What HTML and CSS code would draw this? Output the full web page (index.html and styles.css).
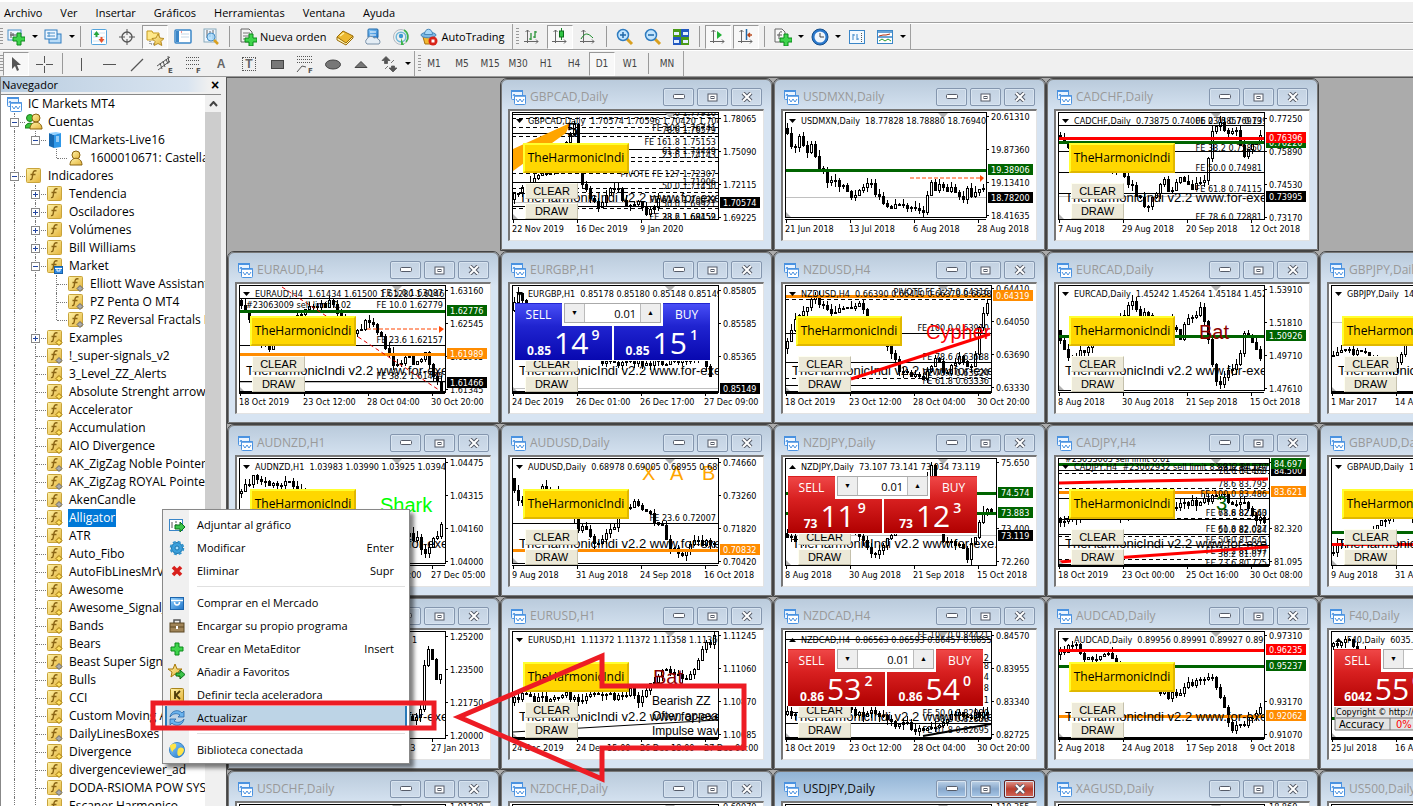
FILE: index.html
```html
<!DOCTYPE html>
<html lang="es">
<head>
<meta charset="utf-8">
<title>IC Markets MT4</title>
<link rel="stylesheet" href="styles.css">
</head>
<body>
<svg class="defs" aria-hidden="true">
  <defs>
    <linearGradient id="gold" x1="0" y1="0" x2="1" y2="1"><stop offset="0" stop-color="#fff3a8"/><stop offset="1" stop-color="#e4b43c"/></linearGradient>
    <linearGradient id="blue" x1="0" y1="0" x2="1" y2="1"><stop offset="0" stop-color="#8fd0ff"/><stop offset="1" stop-color="#1f74c8"/></linearGradient>
    <g id="plus"><path d="M4 0h4v4h4v4H8v4H4V8H0V4h4z" fill="#3fd44c" stroke="#0a8a1a"/></g>
    <g id="axes"><path d="M4.500 2v13M1 13.500h14M2.500 4l2-2 2 2M13 11.500l2 2-2 2" fill="none" stroke="#666"/></g>
    <symbol id="newchart" viewBox="0 0 18 18"><rect x="1" y="2" width="13" height="10" fill="#eef6ff" stroke="#4a90c8"/><path d="M4 4v6M3 7h8M6 5v3" stroke="#555" fill="none"/><use href="#plus" x="6" y="5"/></symbol>
    <symbol id="profiles" viewBox="0 0 18 18"><rect x="5" y="6" width="12" height="9" fill="#b9dcf8" stroke="#2f7cc0"/><rect x="1" y="2" width="12" height="9" fill="#eef6ff" stroke="#2f7cc0"/><path d="M3 5h8M3 8h8M5 4v5" stroke="#4a90c8"/></symbol>
    <symbol id="watch" viewBox="0 0 18 18"><rect x="1.500" y="1.500" width="15" height="15" rx="1" fill="#fff" stroke="#55a5dd"/><path d="M3 5h12M3 9h12M3 13h12" stroke="#cfe4f4"/><path d="M6.500 3l3 4h-2v2h-2V7h-2z" fill="#26a63a"/><path d="M11.500 15l3-4h-2V9h-2v2h-2z" fill="#e8542c"/></symbol>
    <symbol id="target" viewBox="0 0 18 18"><circle cx="9" cy="9" r="5" fill="none" stroke="#555" stroke-width="1.300"/><path d="M9 1v6M9 11v6M1 9h6M11 9h6" stroke="#555"/></symbol>
    <symbol id="nav" viewBox="0 0 18 18"><path d="M1 3h5l1 2h6v7H1z" fill="#ffe98a" stroke="#c59a20"/><path d="M4 13v3h4" fill="none" stroke="#555" stroke-dasharray="1 1"/><path d="M12 6l2 4 4 .5-3 3 .8 4-3.800-2-3.800 2 .8-4-3-3 4-.5z" fill="url(#gold)" stroke="#a87808" stroke-width=".8"/></symbol>
    <symbol id="terminal" viewBox="0 0 18 18"><rect x="1" y="2" width="16" height="13" rx="1" fill="#fff" stroke="#3a86c8" stroke-width="1.500"/><rect x="2" y="3" width="3" height="11" fill="#3a86c8"/><path d="M7 6h8M7 9h8" stroke="#c4d8e8"/><path d="M7 4h1" stroke="#d22"/></symbol>
    <symbol id="tester" viewBox="0 0 18 18"><rect x="2" y="1" width="12" height="13" fill="#eef6ff" stroke="#8ab"/><path d="M5 2v8M8 3v6M11 2v9" stroke="#666"/><circle cx="9" cy="9" r="4" fill="#a8dcff" fill-opacity=".8" stroke="#4a90c8"/><path d="M12 12l4 4" stroke="#d9a020" stroke-width="2.500"/></symbol>
    <symbol id="order" viewBox="0 0 18 18"><path d="M2 1h8l3 3v10H2z" fill="#f4f4f4" stroke="#666"/><path d="M4 5h7M4 8h7M4 11h3" stroke="#777"/><use href="#plus" x="6" y="6"/></symbol>
    <symbol id="book" viewBox="0 0 18 18"><path d="M1 9v3l9 5 7-7V8" fill="#fff3b0" stroke="#9a6c08"/><path d="M1 9l6-6 10 5-7 7z" fill="#ecb830" stroke="#9a6c08"/><path d="M4 8l4-3" stroke="#fff0a0" stroke-width="1.500"/></symbol>
    <symbol id="market" viewBox="0 0 18 18"><rect x="4" y="1" width="10" height="9" rx="1" fill="url(#blue)" stroke="#2068a8"/><path d="M6 4h6M6 7h6" stroke="#fff"/><path d="M3 16a3 3 0 010-5 4 4 0 017-1 3 3 0 014 1 3 3 0 011 5z" fill="#e4edf5" stroke="#7890a8"/></symbol>
    <symbol id="signal" viewBox="0 0 18 18"><circle cx="9" cy="9" r="7.500" fill="none" stroke="#b0b8c0"/><circle cx="9" cy="9" r="4.800" fill="none" stroke="#72b8d8" stroke-width="1.500"/><circle cx="9" cy="8" r="2.200" fill="#3c98d0"/><path d="M9 10l3 7H9z" fill="#3cb44a"/><path d="M12 2a8 8 0 012 12" fill="none" stroke="#3cb44a" stroke-width="1.600"/></symbol>
    <symbol id="auto" viewBox="0 0 18 18"><path d="M3 9l2 7h6l3-7z" fill="#f2b830" stroke="#a87010"/><ellipse cx="8.500" cy="7" rx="7.500" ry="2.800" fill="#7ab8e4" stroke="#4a88b8"/><path d="M4.500 6.500c0-7 8-7 8 0z" fill="#a8d8f8" stroke="#4a88b8"/><circle cx="13" cy="13" r="4.500" fill="#d92318"/><rect x="11.500" y="11.500" width="3" height="3" fill="#fff"/></symbol>
    <symbol id="bars" viewBox="0 0 18 18"><use href="#axes"/><path d="M8 5v7M8 11h-2M12 3v7M12 4h2M10 9h2" stroke="#178a26" stroke-width="1.200"/></symbol>
    <symbol id="candlesic" viewBox="0 0 18 18"><use href="#axes"/><path d="M10.500 0v12" stroke="#178a26"/><rect x="8.500" y="3" width="4" height="6" fill="#2fc443" stroke="#0c6c1a"/></symbol>
    <symbol id="linesic" viewBox="0 0 18 18"><use href="#axes"/><path d="M2 11c4-7 7-6 12-1" fill="none" stroke="#178a26"/></symbol>
    <symbol id="zin" viewBox="0 0 18 18"><path d="M11 11l5 5" stroke="#d9a020" stroke-width="3"/><circle cx="7" cy="7" r="5.500" fill="#c4e6ff" stroke="#2f7cc0" stroke-width="1.500"/><path d="M4 7h6M7 4v6" stroke="#2068a8" stroke-width="1.500"/></symbol>
    <symbol id="zout" viewBox="0 0 18 18"><path d="M11 11l5 5" stroke="#d9a020" stroke-width="3"/><circle cx="7" cy="7" r="5.500" fill="#c4e6ff" stroke="#2f7cc0" stroke-width="1.500"/><path d="M4 7h6" stroke="#2068a8" stroke-width="1.500"/></symbol>
    <symbol id="tile" viewBox="0 0 18 18"><path d="M1 1h8v8H1zM9 9h8v8H9z" fill="#4a9a18"/><path d="M9 1h8v8H9zM1 9h8v8H1z" fill="#2258c0"/><path d="M2 4h5v3H2zM11 4h5v3h-5zM2 12h5v3H2zM11 12h5v3h-5z" fill="#e4f0ff"/></symbol>
    <symbol id="scroll" viewBox="0 0 18 18"><use href="#axes"/><path d="M8 3l5 4-5 4z" fill="#22b036"/></symbol>
    <symbol id="shift" viewBox="0 0 18 18"><use href="#axes"/><path d="M9.500 1v11" stroke="#2068a8" stroke-width="1.500"/><path d="M15 7h-4M13 5l-2 2 2 2" fill="none" stroke="#b8481c" stroke-width="1.500"/></symbol>
    <symbol id="indic" viewBox="0 0 18 18"><path d="M1 1h7l3 3v10H1z" fill="#f8f8f8" stroke="#666"/><path d="M8 4c-3-1-3 2-3 7M3 7h5" fill="none" stroke="#555"/><use href="#plus" x="6" y="6"/></symbol>
    <symbol id="clock" viewBox="0 0 18 18"><circle cx="9" cy="9" r="8" fill="#2a78cc" stroke="#16508c"/><circle cx="9" cy="9" r="5.500" fill="#f0f6fc"/><path d="M9 5v4h4" fill="none" stroke="#444"/></symbol>
    <symbol id="period" viewBox="0 0 18 18"><rect x="1.500" y="2.500" width="15" height="13" fill="#f4faff" stroke="#3a86c8"/><path d="M5 12V6M5 7h2M9 12V6M9 11h2" stroke="#3a86c8"/><path d="M13.500 5v9" stroke="#555" stroke-dasharray="1 1"/></symbol>
    <symbol id="templ" viewBox="0 0 18 18"><rect x="1.500" y="2.500" width="15" height="13" fill="#fff" stroke="#3a86c8"/><path d="M2 4h14M2 9h14" stroke="#3a86c8" stroke-width="1.500"/><path d="M3 8l4-1 3 0 4-1" fill="none" stroke="#b03010"/><path d="M3 13l3-2 3 2 3-2 3 2" fill="none" stroke="#2a9a30"/></symbol>
    <symbol id="cursor" viewBox="0 0 18 18"><path d="M5 2v12l3-3 2 5 2-1-2-5h4z" fill="#555"/></symbol>
    <symbol id="cross" viewBox="0 0 18 18"><path d="M9.500 1v7M9.500 11v7M1 9.500h7M11 9.500h7" stroke="#555"/></symbol>
    <symbol id="vl" viewBox="0 0 18 18"><path d="M9.500 3v13" stroke="#555"/></symbol>
    <symbol id="hl" viewBox="0 0 18 18"><path d="M3 9.500h13" stroke="#555"/></symbol>
    <symbol id="tl" viewBox="0 0 18 18"><path d="M3 16L15 4" stroke="#555" stroke-width="1.300"/></symbol>
    <symbol id="chan" viewBox="0 0 18 18"><path d="M1 11L14 2M2 15l12-9M4 8l2 6M7 6l2 6M10 4l2 5M12 1l1 7" stroke="#555"/><text x="12" y="18" class="tiny">E</text></symbol>
    <symbol id="fibo" viewBox="0 0 18 18"><path d="M2 2.500h14M2 5.500h14M2 9.500h14M2 13.500h8" stroke="#555" stroke-dasharray="1 1"/><text x="12" y="18" class="tiny">F</text></symbol>
    <symbol id="fan" viewBox="0 0 18 18"><path d="M1 1.500h16M1 4.500h16M1 7.500h16" stroke="#555" stroke-dasharray="1 1"/><path d="M1 17l5-6 4 1" stroke="#555" fill="none"/><text x="12" y="18" class="tiny">F</text></symbol>
    <symbol id="rect" viewBox="0 0 18 18"><rect x="3.500" y="5.500" width="12" height="8" fill="#777" stroke="#444"/></symbol>
    <symbol id="ell" viewBox="0 0 18 18"><ellipse cx="9" cy="9.500" rx="7.500" ry="4.500" fill="#777" stroke="#444"/></symbol>
    <symbol id="tri" viewBox="0 0 18 18"><path d="M3 12.500l6-6 6 6z" fill="#777" stroke="#444"/></symbol>
    <symbol id="arrows" viewBox="0 0 18 18"><path d="M6 1.500l4 4H7.500v3h-3v-3H2zM13 17l4-4h-2.500v-2h-3v2H9zM5 14l3-3M11 8l3-3" fill="#555" stroke="#555" stroke-width=".8"/></symbol>
    <symbol id="win" viewBox="0 0 15 15"><rect x=".5" y=".5" width="11" height="9" rx="1" fill="#eaf4ff" stroke="#4a92e0"/><path d="M0 1h12" stroke="#4a92e0" stroke-width="2"/><path d="M2 6l1-2 2 3" fill="none" stroke="#4a92e0"/><rect x="3.500" y="5.500" width="11" height="9" rx="1" fill="#fff" stroke="#4a92e0"/><path d="M3 6h12" stroke="#4a92e0" stroke-width="1.500"/><path d="M5 9l2 3 2-3 2 3 2-3" fill="none" stroke="#4a92e0"/></symbol>
    <symbol id="users" viewBox="0 0 18 18"><circle cx="5" cy="5" r="3.500" fill="#3cc43c" stroke="#1a7a1a"/><path d="M0 15c0-6 9-7 10 0z" fill="#3cc43c" stroke="#1a7a1a"/><circle cx="11" cy="5" r="4" fill="url(#gold)" stroke="#8a6410"/><path d="M5 16c0-9 12-9 12 0z" fill="url(#gold)" stroke="#8a6410"/></symbol>
    <symbol id="user" viewBox="0 0 18 18"><circle cx="9" cy="6" r="4" fill="url(#gold)" stroke="#8a6410"/><path d="M3 16c0-9 12-9 12 0z" fill="url(#gold)" stroke="#8a6410"/></symbol>
    <symbol id="server" viewBox="0 0 18 18"><path d="M3 2l5 2v13l-5-2z" fill="#1668b0"/><path d="M3 2l7-1 5 1-7 2z" fill="#8fd0ff"/><path d="M8 4l7-2v14l-7 1z" fill="#2f98e8"/><path d="M10 6h3M10 8h3M10 10h3" stroke="#fff"/></symbol>
    <symbol id="fx" viewBox="0 0 18 18"><rect x="1.500" y="1.500" width="14" height="14" rx="1" fill="url(#gold)" stroke="#c8a43c"/><path d="M11.500 4C8 3 8 6 7.500 9S7 13 5 12.500M5.500 7.500h5" fill="none" stroke="#8a6414" stroke-width="1.400"/></symbol>
    <symbol id="fxd" viewBox="0 0 18 18"><use href="#fx"/><path d="M13 10.500l3 3-3 3-3-3z" fill="#ffe060" stroke="#9a7008"/></symbol>
    <symbol id="fxg" viewBox="0 0 18 18"><use href="#fx"/><path d="M13 10.500l3 3-3 3-3-3z" fill="#aaa" stroke="#666"/></symbol>
    <symbol id="fxm" viewBox="0 0 18 18"><use href="#fx"/><rect x="8.500" y="9.500" width="8" height="7" fill="#2f88e0" stroke="#1660a8"/><path d="M9 11.500h7M11 12v2h3v-2" stroke="#fff" fill="none"/></symbol>
    <symbol id="attach" viewBox="0 0 18 18"><rect x="1.500" y="3.500" width="13" height="11" fill="#fff" stroke="#3a86c8"/><path d="M4 6v6M7 6h2M7 9h2" stroke="#555"/><path d="M7 9h5V6l5 5-5 5v-3H7z" fill="#3cc44a" stroke="#0a7018"/></symbol>
    <symbol id="gear" viewBox="0 0 18 18"><circle cx="9" cy="9" r="5.500" fill="#3aa0dc" stroke="#1c74ac"/><circle cx="9" cy="9" r="6.500" fill="none" stroke="#2a90cc" stroke-width="1.500" stroke-dasharray="3 2.100"/><circle cx="9" cy="9" r="2" fill="#a8e0ff" stroke="#1c74ac"/></symbol>
    <symbol id="del" viewBox="0 0 18 18"><path d="M5 5l8 8M13 5l-8 8" stroke="#d8201c" stroke-width="3.600"/></symbol>
    <symbol id="shop" viewBox="0 0 18 18"><rect x="2.500" y="3.500" width="13" height="12" fill="url(#blue)" stroke="#1c64ac"/><path d="M3 6.500h12" stroke="#fff" stroke-width="1.500"/><path d="M6.500 8c0 4 5 4 5 0" fill="none" stroke="#fff" stroke-width="1.500"/></symbol>
    <symbol id="case" viewBox="0 0 18 18"><path d="M6 6V3h6v3" fill="none" stroke="#555" stroke-width="1.500"/><rect x="2" y="6" width="14" height="9" fill="#a08458" stroke="#5c4824"/><path d="M2 10h14" stroke="#5c4824"/><rect x="8" y="9" width="2" height="3" fill="#fff"/></symbol>
    <symbol id="add" viewBox="0 0 18 18"><use href="#plus" x="3" y="3"/></symbol>
    <symbol id="fav" viewBox="0 0 18 18"><path d="M7 1l2 5h5l-4 3 1.500 5L7 11l-4 3 1-5-4-3h5z" fill="url(#gold)" stroke="#a87808"/><path d="M8 10h4V7l5 4.500-5 4.500v-3H8z" fill="#3cc44a" stroke="#0a7018"/></symbol>
    <symbol id="key" viewBox="0 0 18 18"><rect x="2.500" y="2.500" width="13" height="13" rx="1" fill="url(#gold)" stroke="#a8841c"/><path d="M7 5v8M12 5l-4 4 4 4" fill="none" stroke="#4c3a08" stroke-width="1.800"/></symbol>
    <symbol id="refresh" viewBox="0 0 18 18"><path d="M2 8c1-7 9-8 12-4l2-2v6h-6l2-2C9 4 5 4 2 8zM16 10c-1 7-9 8-12 4l-2 2v-6h6l-2 2c3 2 7 2 10-2z" fill="#6ab4ee" stroke="#2868a8" stroke-width=".8"/></symbol>
    <symbol id="globe" viewBox="0 0 18 18"><circle cx="9" cy="9" r="7.500" fill="url(#blue)" stroke="#3a86c8"/><path d="M3 4c4-3 6-1 5 2s-3 2-3 4-3-1-3-6zM10 8c3-3 6-1 6 1s-3 6-5 6-2-4-1-7z" fill="#ffe448"/></symbol>
  </defs>
</svg>

<nav class="menubar" aria-label="Menú principal">
  <button>Archivo</button><button>Ver</button><button>Insertar</button><button>Gráficos</button><button>Herramientas</button><button>Ventana</button><button>Ayuda</button>
</nav>
<div class="toolbar" data-items="grip newchart drop profiles drop | watch target nav! terminal tester | order:Nueva_orden book market signal auto:AutoTrading end grip bars candlesic! linesic | zin zout tile | scroll! shift! | indic drop clock drop period templ drop end"></div>
<div class="toolbar" data-items="grip cursor! cross | vl hl tl chan fibo #A #T rect fan ell tri arrows drop end grip #M1 #M5 #M15 #M30 #H1 #H4 #D1! #W1 | #MN end"></div>

<div class="main">
  <aside class="navigator">
    <header><span>Navegador</span><button aria-label="Cerrar">×</button></header>
    <div class="navbody">
      <div class="tree" role="tree"></div>
      <div class="scrollbar"><button aria-label="Subir"><svg width="9" height="6"><path d="M1 5l3.500-4L8 5" fill="none" stroke="#444" stroke-width="2"/></svg></button><div class="thumb"></div></div>
    </div>
  </aside>
  <main class="desktop"></main>
</div>

<div class="context" role="menu">
  <button><svg><use href="#attach"/></svg><span>Adjuntar al gráfico</span></button>
  <button><svg><use href="#gear"/></svg><span>Modificar</span><kbd>Enter</kbd></button>
  <button><svg><use href="#del"/></svg><span>Eliminar</span><kbd>Supr</kbd></button>
  <hr>
  <button><svg><use href="#shop"/></svg><span>Comprar en el Mercado</span></button>
  <button><svg><use href="#case"/></svg><span>Encargar su propio programa</span></button>
  <button><svg><use href="#add"/></svg><span>Crear en MetaEditor</span><kbd>Insert</kbd></button>
  <button><svg><use href="#fav"/></svg><span>Añadir a Favoritos</span></button>
  <button><svg><use href="#key"/></svg><span>Definir tecla aceleradora</span></button>
  <button class="active"><svg><use href="#refresh"/></svg><span>Actualizar</span></button>
  <hr>
  <button><svg><use href="#globe"/></svg><span>Biblioteca conectada</span></button>
</div>
<svg class="marks" aria-hidden="true">
  <rect x="153" y="703" width="281" height="25"/>
  <path d="M459 717L602 656v30h142v62H602v31z"/>
</svg>
<script src="app.js"></script>
</body>
</html>
```
FILE: styles.css
```css
* { box-sizing: border-box; }
body { margin: 0; height: 100vh; overflow: hidden; display: flex; flex-direction: column; background: #f0f0f0; color: #000; font: 12px/18px "Open Sans", "Noto Sans", sans-serif; position: relative; }
button { font: inherit; color: inherit; background: none; border: 0; padding: 0; margin: 0; }
.defs { position: absolute; width: 0; height: 0; }
.tiny { font: bold 7px "DejaVu Sans", sans-serif; fill: #555; }

.menubar { display: flex; gap: 18px; height: 23px; padding: 1px 4px 0; border-top: 2px solid #fff; border-bottom: 1px solid #a0a0a0; flex: none; font-size: 11px; }
.toolbar { display: flex; align-items: center; height: 27px; border-top: 1px solid #fff; border-bottom: 1px solid #a0a0a0; flex: none; }
.toolbar + .toolbar { border-bottom: 0; height: 26px; }
.grip { width: 3px; height: 18px; margin-right: -1px; background: repeating-linear-gradient(#999 0 1px, #f0f0f0 1px 3px); }
.end { width: 1px; height: 25px; background: #a0a0a0; margin: 0 3px 0 2px; }
.sep { width: 1px; height: 21px; background: #999; margin: 0 4px; }
.tool { width: 28px; height: 24px; display: flex; align-items: center; justify-content: center; }
.tool svg { width: 18px; height: 18px; flex: none; }
.tool.wide { width: auto; padding: 0 5px; gap: 3px; font-size: 11px; }
.tool.pressed { width: 26px; margin: 0 1px; background: #f8f8f8; border: 1px solid; border-color: #999 #fff #fff #999; }
.tool.txt { font: 10px "DejaVu Sans Condensed", "Noto Sans", sans-serif; color: #444; }
.tool.letter { font: bold 12px "Liberation Sans", sans-serif; color: #666; }
.tool.boxed span { border: 1px dotted #555; padding: 0 2px; line-height: 12px; }
.drop { width: 9px; height: 24px; display: flex; align-items: center; justify-content: center; }
.drop::before { content: ""; border: 3px solid transparent; border-top-color: #000; border-bottom: 0; }

.main { flex: 1; display: flex; min-height: 0; border-top: 1px solid #999; }
.navigator { width: 226px; flex: none; display: flex; flex-direction: column; border-left: 1px solid #888; }
.navigator header { height: 15px; margin: 0 6px 0 0; padding-left: 1px; display: flex; justify-content: space-between; align-items: center; background: linear-gradient(90deg, #b9cde0, #d9e4f0 85%, #f0f0f0 95%); font: 11px "Open Sans", sans-serif; }
.navigator header button { font: bold 14px/12px "Liberation Sans", sans-serif; width: 10px; }
.navbody { flex: 1; min-height: 0; display: flex; margin: 2px 5px 0 0; background: #fff; border-top: 1px solid #888; }
.tree { flex: 1; min-width: 0; overflow: hidden; }
.row { display: flex; align-items: center; height: 18px; white-space: nowrap; padding-left: 3px; }
.row > svg { width: 18px; height: 18px; flex: none; margin-right: 4px; }
.row.root > svg { width: 15px; height: 15px; margin: 0 6px 0 3px; }
.row.sel .label { background: #0078d7; color: #fff; }
.row .label { padding: 0 1px; }
.row.root .label { padding: 0; }
.cell { width: 21px; height: 18px; flex: none; position: relative; }
.cell.v::before, .cell.b::before, .cell.c::before { content: ""; position: absolute; left: 10px; top: 0; bottom: 0; border-left: 1px dotted #777; }
.cell.c::before { bottom: 9px; }
.cell.b::after, .cell.c::after { content: ""; position: absolute; left: 11px; right: 0; top: 9px; border-top: 1px dotted #777; }
.cell button { position: absolute; z-index: 1; left: 6px; top: 5px; width: 9px; height: 9px; border: 1px solid #888; background: #fff; }
.cell button::before { content: ""; position: absolute; left: 1px; right: 1px; top: 3px; border-top: 1px solid #2446a0; }
.cell button.plus::after { content: ""; position: absolute; top: 1px; bottom: 1px; left: 3px; border-left: 1px solid #2446a0; }
.scrollbar { width: 16px; background: #f0f0f0; }
.scrollbar button { display: flex; width: 16px; height: 17px; align-items: center; justify-content: center; }
.thumb { height: 57%; background: #cdcdcd; }

.desktop { flex: 1; min-width: 0; overflow: hidden; background: #ababab; border-left: 1px solid #555; display: grid; grid-template-columns: repeat(5, 273px); grid-auto-rows: 173px; border-top: 1px solid #555; }
.window { border: 1px solid #444; outline: 1px solid #777; outline-offset: -2px; border-radius: 7px 7px 0 0; background: linear-gradient(#b9cadb, #d7e4f2 34px); padding: 6px 8px 9px 7px; display: flex; flex-direction: column; }
.window.on { background: linear-gradient(#8fb2d4, #c2d8ee 34px); }
.bar { height: 24px; display: flex; align-items: center; gap: 3px; padding: 0 2px 0 3px; }
.bar svg.wi { width: 15px; height: 15px; flex: none; }
.bar h2 { flex: 1; margin: 0 0 0 1px; font: 12px/18px "Open Sans", sans-serif; color: #999; white-space: nowrap; }
.on .bar h2 { color: #111; }
.bar button { width: 31px; height: 18px; border: 1px solid #8496ae; border-radius: 2px; background: linear-gradient(#c3d2e2, #cfdceb); box-shadow: inset 0 0 0 1px #d8e4f0; display: flex; align-items: center; justify-content: center; }
.on .bar button { background: linear-gradient(#bcd2e8, #88a8cc 50%, #a8c8e8); }
.on .bar button:last-child { background: linear-gradient(#e09a90, #b83c2c 50%, #d0685c); border-color: #602020; }
.client { flex: 1; position: relative; overflow: hidden; background: #fff; border: 2px solid #777; border-right-color: #e3e3e3; border-bottom-color: #e3e3e3; border-right-width: 1px; border-bottom-width: 1px; }
.client > svg { display: block; position: absolute; left: 0; top: 0; width: 254px; height: 129px; }
.client text { font: 9px "DejaVu Sans Condensed", "Noto Sans", sans-serif; white-space: pre; }
.client text.mark { font: 13px "Liberation Sans", sans-serif; }
.client text.big { font: 20px "Liberation Sans", sans-serif; }
.client text.note { font: 12px "Liberation Sans", sans-serif; }
.client text.info { font-size: 11px; }
.indi, .cmd { position: absolute; z-index: 1; }
.indi { left: 13px; top: 32px; width: 106px; height: 30px; background: #ffd700; border: 2px solid; border-color: #ffff30 #e0b800 #e0b800 #ffff30; white-space: nowrap; }
.cmd { left: 15px; width: 53px; height: 16px; background: #ece9d8; border: 1px solid; border-color: #fffff0 #c4c0ac #c4c0ac #fffff0; font: 11px/14px "Liberation Sans", sans-serif; }
.cmd.clear { top: 72px; }
.cmd.draw { top: 92px; }
.quote { position: absolute; z-index: 2; left: 5px; top: 19px; width: 195px; height: 58px; border-bottom: 2px solid #fff; display: grid; grid-template-columns: 47px 1fr 47px; grid-template-rows: 23px 33px; color: #fff; --a: #4a50f8; --b: #2024d0; --c: #0808b0; background: #fff; }
.quote.red { --a: #f04848; --b: #d82020; --c: #b00000; }
.quote.narrow { width: 189px; }
.quote .side { background: linear-gradient(var(--a), var(--b)); height: 23px; line-height: 21px; box-shadow: inset 0 1px var(--b); }
.quote .vol { display: flex; border: 1px solid #aaa; margin: 0 2px 3px; background: #fff; color: #000; }
.vol button { width: 19px; background: #eee; font-size: 7px; line-height: 18px; flex: none; }
.vol input { border: 0; border-left: 1px solid #bbb; border-right: 1px solid #bbb; width: 10px; flex: 1; min-width: 0; text-align: right; padding: 0 4px; font: 11px "Open Sans", sans-serif; }
.prices { grid-column: 1 / 4; display: grid; grid-template-columns: 1fr 1fr; gap: 2px; }
.prices div { background: linear-gradient(var(--b), var(--c)); display: flex; justify-content: center; align-items: flex-end; gap: 3px; }
.prices b { font-size: 12px; line-height: 19px; }
.prices big { font-size: 30px; line-height: 34px; }
.prices sup { font-size: 14px; line-height: 18px; align-self: flex-start; font-weight: 600; }

.context { position: absolute; z-index: 5; left: 162px; top: 509px; width: 248px; padding: 3px 2px 2px; border: 1px solid #888; background: linear-gradient(90deg, #f0f0f0 26px, #fff 26px); box-shadow: 4px 4px 4px rgba(0, 0, 0, .5); font-size: 11px; }
.context button { display: flex; width: 100%; height: 23px; align-items: center; padding: 0 13px 0 3px; text-align: left; }
.context svg { width: 18px; height: 18px; margin-right: 11px; }
.context span { flex: 1; }
.context kbd { font: inherit; }
.context hr { height: 1px; border: 0; margin: 4px 2px 4px 32px; background: #e0e0e0; }
.context .active { background: #bdd4e6; box-shadow: inset 2px 0 #2a7ab8, inset -2px 0 #2a7ab8; }
.marks { position: absolute; z-index: 6; left: 0; top: 0; width: 100%; height: 100%; pointer-events: none; fill: none; stroke: #ed1c24; stroke-width: 5px; }
```
FILE: app.js
```js
const use = (id, cls = '') => `<svg class="${cls}"><use href="#${id}"/></svg>`;

document.querySelectorAll('.toolbar').forEach(bar => {
  bar.innerHTML = bar.dataset.items.split(' ').map(item => {
    if (item === '|') return '<span class="sep"></span>';
    if (item === 'grip' || item === 'end') return `<span class="${item}"></span>`;
    if (item === 'drop') return '<button class="drop" aria-label="Más"></button>';
    const pressed = item.endsWith('!') ? ' pressed' : '';
    item = item.replace('!', '');
    if (item[0] === '#') {
      const t = item.slice(1);
      const kind = t === 'T' ? 'letter boxed' : t === 'A' ? 'letter' : 'txt';
      return `<button class="tool ${kind}${pressed}"><span>${t}</span></button>`;
    }
    const [id, label] = item.split(':');
    return label
      ? `<button class="tool wide">${use(id)}<span>${label.replace('_', ' ')}</span></button>`
      : `<button class="tool${pressed}" aria-label="${id}">${use(id)}</button>`;
  }).join('');
});

/* Each entry: guide cells, icon, label. v = line, b = branch, c = corner, s = space; - and + add an expander. */
const tree = [
  ['', 'win', 'IC Markets MT4'],
  ['b-', 'users', 'Cuentas'],
  ['v c-', 'server', 'ICMarkets-Live16'],
  ['v s c', 'user', '1600010671: Castella SL'],
  ['b-', 'fx', 'Indicadores'],
  ['v b+', 'fx', 'Tendencia'], ['v b+', 'fx', 'Osciladores'], ['v b+', 'fx', 'Volúmenes'], ['v b+', 'fx', 'Bill Williams'],
  ['v b-', 'fxm', 'Market'],
  ['v v b', 'fxg', 'Elliott Wave Assistant'], ['v v b', 'fxg', 'PZ Penta O MT4'], ['v v c', 'fxg', 'PZ Reversal Fractals MT4'],
  ['v b+', 'fxd', 'Examples'],
  ...['!_super-signals_v2', '3_Level_ZZ_Alerts', 'Absolute Strenght arrows', 'Accelerator', 'Accumulation', 'AIO Divergence',
    'AK_ZigZag Noble Pointer', 'AK_ZigZag ROYAL Pointer', 'AkenCandle', 'Alligator', 'ATR', 'Auto_Fibo', 'AutoFibLinesMrV',
    'Awesome', 'Awesome_Signal_', 'Bands', 'Bears', 'Beast Super Signal', 'Bulls', 'CCI', 'Custom Moving Average',
    'DailyLinesBoxes', 'Divergence', 'divergenceviewer_ad', 'DODA-RSIOMA POW SYS', 'Escaner Harmonico']
    .map(t => ['v b', /super|ZigZag|Aken|Beast|Daily|DODA/.test(t) ? 'fxg' : 'fxd', t])
];
document.querySelector('.tree').innerHTML = tree.map(([cells, icon, label]) => {
  const guides = cells ? cells.split(' ').map(c => `<span class="cell ${c[0]}">${
    c[1] ? `<button class="${c[1] === '+' ? 'plus' : ''}" aria-label="Expandir"></button>` : ''}</span>`).join('') : '';
  return `<div role="treeitem" class="row ${cells ? '' : 'root'} ${label === 'Alligator' ? 'sel' : ''}">${guides}${use(icon)}<span class="label">${label}</span></div>`;
}).join('');

const GREEN = '#006400', ORANGE = '#ff8c00', RED = '#ff0000';
const aug = ['8 Aug 2018', '30 Aug 2018', '21 Sep 2018', '15 Oct 2018'];
const oct = ['18 Oct 2019', '23 Oct 12:00', '28 Oct 04:00', '30 Oct 20:00'];

/* h: solid levels, d: dashed levels, lv: coloured levels, fe: right-aligned notes,
   tags: price boxes, p: price path, x: extra shapes */
const charts = [
  { col: 2, row: 1, t: 'GBPCAD,Daily', q: '1.70574 1.70596 1.70420 1.70485', y: ['1.78065', '1.75090', '1.72115', '1.69225'], y0: 41, dates: ['22 Nov 2019', '16 Dec 2019', '9 Jan 2020'],
    h: [37, 56, 72, 105, 129], d: [41, 50, 59, 80, 84, 96, 111, 115, 131], tags: [[125, '1.70574', '#000']],
    fe: [[38, '0.0 1.77916'], [53, 'FE 100 1.76741'], [55, '78.6 1.76579'], [67, 'FE 161.8 1.75153'], [76, '61.8 1.74449'], [80, '23.6 1.74143'], [99, 'PIVOTE FE 127 1.72307'], [107, '1.71906'], [111, '50.0 1.71450'], [125, 'FE 61.8 1.70073'], [129, '50.0 1.69921'], [142, 'FE 38.2 1.68459'], [142, '23.6 1.69152']],
    p: [[13, 122], [21, 112], [38, 103], [42, 96], [54, 95], [70, 60], [76, 50], [81, 88], [85, 112], [92, 118], [98, 130], [104, 126], [112, 112], [118, 108], [126, 128], [134, 124], [142, 124], [148, 136], [154, 133], [160, 124]],
    x: '<path d="M13 72L70 46 66 56 13 94z" fill="#ffa500"/><text x="67" y="60" class="big">5</text>' },
  { col: 3, row: 1, plain: 1, t: 'USDMXN,Daily', q: '18.77828 18.78880 18.76940', y: ['20.61310', '19.87360', '19.13410', '18.41635'], r: 213, pb: 140, dates: ['21 Jun 2018', '13 Jul 2018', '6 Aug 2018', '28 Aug 2018'],
    lv: [[93, GREEN]], tags: [[92, '19.38906', GREEN], [120, '18.78200', '#000']],
    p: [[13, 51], [17, 60], [21, 68], [25, 66], [30, 58], [34, 75], [38, 70], [42, 63], [46, 90], [52, 91], [56, 103], [66, 106], [72, 110], [80, 117], [88, 115], [95, 108], [100, 109], [106, 117], [112, 126], [120, 130], [130, 127], [140, 132], [148, 136], [152, 134], [158, 110], [162, 103], [165, 117], [169, 105], [175, 112], [185, 113], [192, 122], [195, 112], [202, 120], [206, 107], [211, 112]],
    x: '<path d="M137 101h70" stroke="#ff4500" stroke-dasharray="4 2"/><path d="M207 98l4 3-4 4z" fill="#ff4500"/>' },
  { col: 4, row: 1, t: 'CADCHF,Daily', q: '0.73875 0.74006 0.73857 0.73995', y: ['0.77250', '0.75890', '0.74530', '0.73170'], y0: 41, dates: ['7 Aug 2018', '29 Aug 2018', '20 Sep 2018', '12 Oct 2018'],
    h: [48, 74, 95, 116], lv: [[65, GREEN], [61, RED]], tags: [[65, '0.76220', GREEN], [60, '0.76396', RED], [119, '0.73995', '#000']],
    fe: [[46, 'FE 23.6 0.76919'], [73, 'FE 38.2 0.75850'], [93, 'FE 50.0 0.74981'], [114, 'FE 61.8 0.74115'], [142, 'FE 78.6 0.72881']],
    p: [[13, 58], [19, 68], [30, 72], [60, 84], [80, 98], [92, 116], [102, 132], [110, 118], [118, 102], [128, 116], [138, 98], [146, 112], [154, 108], [162, 100], [167, 55], [175, 45], [182, 52], [192, 56], [200, 78], [206, 68], [215, 60]] },

  { col: 1, row: 2, t: 'EURAUD,H4', q: '1.61434 1.61500 1.61280 1.61466', y: ['1.63160', '1.62545', '1.61905', '1.61345'], y0: 40, dates: oct, thick: 1,
    h: [48, 95, 131], lv: [[61, GREEN], [104, ORANGE]], tags: [[60, '1.62776', GREEN], [103, '1.61989', ORANGE], [132, '1.61466', '#000']],
    fe: [[45, 'FE 5.0 1.63087'], [57, 'FE 10.0 1.62779'], [92, 'FE 23.6 1.62157'], [128, 'FE 38.2 1.61489']],
    p: [[13, 50], [23, 70], [34, 95], [50, 96], [70, 64], [98, 55], [106, 52], [114, 62], [122, 84], [132, 80], [142, 68], [150, 80], [158, 90], [164, 106], [170, 118], [180, 105], [190, 112], [200, 102], [208, 126], [215, 138]],
    x: '<path d="M55 37L212 140" stroke="#e00000" stroke-dasharray="4 3"/><path d="M140 79h72" stroke="#ff4500" stroke-dasharray="4 2"/><path d="M212 76l5 3-5 4z" fill="#ff4500"/><text x="19" y="58">#23063009 sell limit 0.02</text>' },
  { col: 2, row: 2, t: 'EURGBP,H1', q: '0.85178 0.85180 0.85148 0.85149', y: ['0.85805', '0.85585', '0.85365', ''], y0: 40, dates: ['24 Dec 2019', '26 Dec 01:00', '26 Dec 17:00', '27 Dec 09:00'], thick: 1,
    quote: ['blue', '0.85', '14', '9', '0.85', '15', '1'], tags: [[138, '0.85149', '#000']], p: [[13, 60], [19, 44], [25, 50], [60, 90], [106, 112], [160, 112], [204, 110], [212, 125]] },
  { col: 3, row: 2, t: 'NZDUSD,H4', q: '0.66390 0.66410 0.66370 0.66380', y: ['0.64410', '0.64050', '0.63690', '0.63330'], y0: 38, dates: oct, thick: 1,
    h: [83, 112, 135], d: [49, 128], lv: [[46, ORANGE]], tags: [[45, '0.64319', ORANGE]],
    fe: [[44, 'PIVOTE FE 127 0.64316'], [80, 'FE 100.0 0.63910'], [109, 'FE 78.6 0.63688'], [125, 'FE 70.7 0.63524'], [133, 'FE 61.8 0.63336']],
    p: [[13, 98], [21, 80], [26, 66], [34, 60], [40, 48], [48, 52], [56, 62], [68, 60], [78, 60], [90, 54], [100, 78], [116, 96], [128, 118], [138, 124], [152, 130], [164, 108], [174, 122], [188, 108], [202, 118], [208, 80], [215, 55]],
    x: '<path d="M78 129L217 84" stroke="red" stroke-width="3"/><text x="153" y="89" class="big" fill="red">Cypher</text>' },
  { col: 4, row: 2, t: 'EURCAD,Daily', q: '1.45242 1.45264 1.45184 1.45210', y: ['1.53910', '1.51810', '1.49710', '1.47610'], pb: 140, dates: aug,
    lv: [[86, GREEN]], tags: [[85, '1.50926', GREEN]],
    p: [[13, 80], [19, 100], [26, 108], [38, 100], [52, 90], [68, 80], [80, 62], [87, 50], [94, 66], [104, 62], [114, 76], [124, 72], [136, 86], [142, 70], [150, 65], [158, 58], [164, 90], [170, 128], [178, 136], [184, 118], [194, 116], [200, 84], [208, 90], [215, 106]],
    x: '<text x="153" y="89" class="big" fill="#8b0000">Bat</text>' },
  { col: 5, row: 2, t: 'GBPJPY,Daily', q: '146.510 146.702', y: [], dates: ['1 Mar 2017', '14 Apr 2017'], thick: 1, h: [], tags: [[72, '', '#000']], p: [[13, 105], [30, 100], [50, 104], [76, 120], [90, 90], [120, 60]] },

  { col: 1, row: 3, t: 'AUDNZD,H1', q: '1.03983 1.03990 1.03925 1.03941', y: ['1.04475', '1.04315', '1.04160', '1.04000'], pb: 140, dates: ['24 Dec 2019', '26 Dec 01:00', '26 Dec 17:00', '27 Dec 05:00'],
    p: [[13, 70], [20, 62], [30, 54], [40, 58], [50, 64], [62, 58], [72, 66], [100, 90], [140, 110], [186, 112], [194, 118], [200, 132], [206, 116], [212, 114], [216, 104]],
    x: '<text x="153" y="89" class="big" fill="#0f0">Shark</text>' },
  { col: 2, row: 3, t: 'AUDUSD,Daily', q: '0.68978 0.69005 0.68955 0.68980', y: ['0.74660', '0.73260', '0.71820', '0.70420'], pb: 140, dates: ['9 Aug 2018', '31 Aug 2018', '24 Sep 2018', '16 Oct 2018'],
    h: [100], lv: [[127, ORANGE]], tags: [[126, '0.70832', ORANGE]], fe: [[97, 'FE 23.6 0.72007']],
    p: [[13, 55], [20, 78], [30, 84], [44, 64], [56, 68], [70, 82], [80, 105], [90, 108], [98, 122], [108, 110], [116, 106], [124, 88], [134, 80], [144, 88], [154, 94], [164, 102], [172, 125], [184, 132], [194, 118], [204, 120], [215, 118]],
    x: '<text x="142" y="57" class="big" fill="#ffa500">X</text><text x="170" y="57" class="big" fill="#ffa500">A</text><text x="202" y="57" class="big" fill="#ffa500">B</text>' },
  { col: 3, row: 3, up: 1, t: 'NZDJPY,Daily', q: '73.107 73.141 73.034 73.119', y: ['75.650', '', '73.400', '72.260'], r: 223, dates: aug,
    quote: ['red narrow', '73', '11', '9', '73', '12', '3'], lv: [[70, GREEN], [90, GREEN]], tags: [[69, '74.574', GREEN], [89, '73.883', GREEN], [112, '73.119', '#000']],
    p: [[13, 110], [30, 118], [60, 108], [80, 108], [90, 116], [104, 132], [120, 112], [160, 45], [172, 116], [190, 124], [196, 134], [208, 102], [214, 86], [221, 88]] },
  { col: 4, row: 3, t: 'CADJPY,H4', q: '#23062932 sell limit 83.912 84.697 84.512', y: ['84.945', '', '82.320', '81.095'], r: 223, dates: ['18 Oct 2019', '23 Oct 00:00', '25 Oct 16:00', '30 Oct 08:00'], thick: 1,
    h: [47, 75, 96, 111, 122], d: [50, 65, 95, 113, 136], lv: [[41, GREEN], [69, ORANGE]], tags: [[47, '84.500', '#000'], [40, '84.697', GREEN], [68, '83.621', ORANGE]],
    fe: [[50, '78.6 84.468'], [46, '88.6 84.577'], [63, '78.6 83.795'], [73, 'FE 100.0 83.486'], [92, 'FE 78.6 82.660'], [92, '61.8 82.643'], [108, 'FE 61.8 82.027'], [109, '50.0 82.084'], [119, 'FE 50.0 81.645'], [130, 'FE 38.2 81.097'], [133, '38.2 81.077'], [142, 'FE 23.6 80.725']],
    p: [[13, 96], [20, 98], [34, 92], [60, 90], [80, 92], [110, 84], [128, 82], [146, 80], [160, 76], [176, 72], [190, 80], [204, 84], [212, 96], [221, 98]],
    x: '<path d="M13 60L100 58 222 56M13 139L222 124" fill="none" stroke="red" stroke-width="3"/><text x="170" y="87" class="big" fill="#006400">3</text><text x="19" y="39">#23053005 sell limit 0.01</text>' },
  { col: 5, row: 3, t: 'GBPAUD,Daily', q: '1.87402 1.87512', y: [], dates: ['9 Aug 2018', '31 Aug 2018'], lv: [[109, GREEN], [121, RED]], p: [[13, 130], [21, 118], [50, 110], [64, 95], [80, 90], [100, 100]] },

  { col: 1, row: 4, t: '', q: '   1.07300 1.07310 1.07205 1.07324 1', y: ['1.25200', '1.23500', '1.21750', '1.20000'], y0: 40, dates: ['24 Dec 2012', '3 Jan 2013', '15 Jan 2013', '27 Jan 2013'],
    p: [[160, 130], [180, 124], [192, 120], [197, 112], [200, 50], [205, 52], [208, 66], [212, 88], [216, 78]] },
  { col: 2, row: 4, t: 'EURUSD,H1', q: '1.11372 1.11372 1.11358 1.11360', y: ['1.11245', '1.11060', '1.10870', '1.10685'], dates: ['24 Dec 2019', '24 Dec 15:00', '26 Dec 18:00', '27 Dec 00:00'], thick: 1,
    p: [[13, 106], [24, 100], [40, 104], [70, 98], [80, 104], [94, 97], [110, 98], [124, 102], [132, 92], [140, 108], [148, 92], [158, 84], [168, 72], [178, 76], [186, 84], [194, 80], [200, 62], [208, 48], [216, 42]],
    x: '<path d="M13 136L218 124" stroke="#000"/><text x="153" y="88" class="big" fill="#8b0000">Bat</text><text class="note" x="152" y="109">Bearish ZZ</text><text class="note" x="152" y="124">Often appears</text><text class="note" x="152" y="139">Impulse wave</text>' },
  { col: 3, row: 4, up: 1, t: 'NZDCAD,H4', q: '0.86563 0.86593 0.86457 0.86550', y: ['0.84570', '0.83955', '0.83340', '0.82725'], y0: 39, dates: oct, thick: 1,
    quote: ['red', '0.86', '53', '2', '0.86', '54', '0'], h: [43, 66, 127], fe: [[41, 'FE 100.0 0.84421'], [64, '2'], [72, '8'], [83, '4'], [94, '8'], [106, '1'], [119, 'FE 50.0 0.82930'], [125, '38.2 0.82838'], [136, 'FE 61.8 0.82695']],
    p: [[13, 118], [60, 112], [116, 120], [126, 128], [138, 130], [148, 134], [160, 130], [172, 125], [184, 118], [200, 120], [216, 116]], x: '<path d="M150 140L218 128" stroke="#000" stroke-width="2"/>' },
  { col: 4, row: 4, t: 'AUDCAD,Daily', q: '0.89956 0.89991 0.89927 0.89950', y: ['0.97310', '', '0.93170', '0.91070'], dates: ['2 Aug 2018', '24 Aug 2018', '17 Sep 2018', '9 Oct 2018'], thick: 1,
    lv: [[54, RED], [70, GREEN], [120, ORANGE]], tags: [[53, '0.96235', RED], [69, '0.95237', GREEN], [119, '0.92062', ORANGE]],
    p: [[13, 58], [21, 54], [29, 46], [38, 62], [52, 64], [62, 58], [80, 72], [104, 86], [124, 100], [134, 98], [142, 90], [152, 86], [162, 78], [170, 86], [178, 110], [188, 132], [198, 130], [206, 122], [214, 112]] },
  { col: 5, row: 4, up: 1, bare: 1, t: 'F40,Daily', q: '6035.5 6042.0', y: [], dates: ['25 Jul 2018', '16 Aug 2018'], thick: 1, quote: ['red', '6042', '55', '0', '6043', '10', '0'],
    lv: [[122, GREEN]], p: [[13, 50], [30, 42], [50, 60]], x: '<path d="M16 110h140v24H16z" fill="#e4e4e4" stroke="#777"/><path d="M17 122h139M71 122v12" stroke="#777"/><text x="17" y="119">Copyright © http://www</text><text x="20" y="132" class="info">Accuracy</text><text x="77" y="132" fill="red" class="info">0%</text>' },

  ...['USDCHF,Daily', 'NZDCHF,Daily', 'USDJPY,Daily', 'XAGUSD,Daily', 'US500,Daily'].map((t, i) => (
    { col: i + 1, row: 5, t, q: '', y: [['1.01230', '0.69070', '110.355', '18.860', ''][i], '', '', ''], y0: 37, dates: [], p: [[13, 60], [215, 100]], on: i === 2 }))
];

function pathAt(points, x) {
  let i = 1;
  while (i < points.length - 1 && points[i][0] < x) i++;
  const [x0, y0] = points[i - 1], [x1, y1] = points[i];
  return y0 + (y1 - y0) * Math.max(0, Math.min(1, (x - x0) / (x1 - x0)));
}

function candles(points, seed) {
  let s = seed * 7919 + 17, open = points[0][1], out = '';
  const rnd = () => (s = (s * 16807) % 2147483647) / 2147483647;
  for (let x = points[0][0] + 1; x <= points[points.length - 1][0]; x += 4) {
    const close = Math.round(pathAt(points, x + 2) + (rnd() - 0.5) * 7);
    const top = Math.min(open, close), h = Math.max(1, Math.abs(close - open));
    out += `<path d="M${x + .5} ${top - Math.round(rnd() * 6)}V${top + h + Math.round(rnd() * 6)}"/>` +
      `<rect x="${x - .5}" y="${top + .5}" width="2" height="${h}" fill="${close > open ? '#000' : '#fff'}"/>`;
    open = close;
  }
  return `<g stroke="#000" shape-rendering="crispEdges">${out}</g>`;
}

function chart(c, n) {
  const r = c.r || 218, pb = c.pb || 142, y0 = c.y0 || 39, w = r - 12, h = pb - 35;
  const line = (y, attrs) => `<path d="M12 ${y + .5}H${r}" ${attrs}/>`;
  const black = (c.tags || []).find(t => t[2] === '#000');
  const inner = (black ? line(black[0], 'stroke="#c0c0c0"') : '') + candles(c.p, n + 3) +
    (c.h || []).map(y => line(y, 'stroke="#000"')).join('') +
    (c.d || []).map(y => line(y, 'stroke="#000" stroke-dasharray="4 3"')).join('') +
    (c.lv || []).map(([y, k]) => line(y, `stroke="${k}" stroke-width="3"`)).join('') +
    (c.fe || []).map(([y, t]) => `<text x="${r - 2}" y="${y + 1}" text-anchor="end">${t}</text>`).join('') +
    (c.plain || c.bare ? '' : '<text x="19" y="125" class="mark">TheHarmonicIndi v2.2 www.for-exe.com</text>') + (c.x || '') +
    `<path d="${c.up ? 'M16 46h7l-3.500-4z' : 'M16 42h7l-3.500 4z'}"/><path d="M165 36h10l-5 5zM12 ${pb}v-6l6 6z" fill="#b0b0b0"/>` +
    `<text x="28" y="47">${c.t}  ${c.q}</text>`;
  const axis = c.y.map((t, i) => t ? `<path d="M${r} ${y0 + i * 33 + .5}h3" stroke="#000"/><text x="${r + 5}" y="${y0 + i * 33 + 4}">${t}</text>` : '').join('');
  const tags = (c.tags || []).filter(t => t[1]).map(([y, t, k]) => `<rect x="${r + 2}" y="${y - 5}" width="${260 - r - 2}" height="11" fill="${k}"/><text x="${r + 5}" y="${y + 4}" fill="#fff">${t}</text>`).join('');
  const dates = c.dates.map((t, i) => `<path d="M${13.5 + i * 64} 142v4" stroke="#000"/><text x="${12 + i * 64}" y="155">${t}</text>`).join('');
  return `<svg viewBox="10 34 254 129"><svg x="12" y="35" width="${w}" height="${h}" viewBox="12 35 ${w} ${h}">${inner}</svg>` +
    `<rect x="12.500" y="35.500" width="${w}" height="${h}" fill="none" stroke="#000"/><path d="M12 142.500H${r}" stroke="#000" stroke-width="${c.thick ? 3 : 1}"/>${axis}${tags}${dates}</svg>`;
}

const quote = q => `<div class="quote ${q[0]}"><button class="side">SELL</button><div class="vol"><button aria-label="Menos">▼</button><input aria-label="Volumen" value="0.01"><button aria-label="Más">▲</button></div><button class="side">BUY</button>
  <div class="prices"><div><b>${q[1]}</b><big>${q[2]}</big><sup>${q[3]}</sup></div><div><b>${q[4]}</b><big>${q[5]}</big><sup>${q[6]}</sup></div></div></div>`;

document.querySelector('.desktop').innerHTML = charts.map((c, n) => `
<section class="window ${c.on ? 'on' : ''}" style="grid-column:${c.col};grid-row:${c.row}">
  <div class="bar">${use('win', 'wi')}<h2>${c.t}</h2>
    <button aria-label="Minimizar"><svg width="12" height="6"><rect x=".5" y=".5" width="11" height="4" rx="1" fill="#fff" stroke="#555b68"/></svg></button>
    <button aria-label="Maximizar"><svg width="11" height="9"><rect x="1" y="1" width="9" height="7" fill="#fff" stroke="#555b68"/><rect x="4" y="3.500" width="3" height="2" fill="none" stroke="#555b68"/></svg></button>
    <button aria-label="Cerrar"><svg width="12" height="10"><path d="M2 1l8 8M10 1L2 9" stroke="#555b68" stroke-width="4"/><path d="M2 1l8 8M10 1L2 9" stroke="#fff" stroke-width="2"/></svg></button>
  </div>
  <div class="client">${chart(c, n)}
    ${c.plain || c.bare ? '' : (c.quote ? '' : '<button class="indi">TheHarmonicIndi</button>') + '<button class="cmd clear">CLEAR</button><button class="cmd draw">DRAW</button>'}
    ${c.quote ? quote(c.quote) : ''}
  </div>
</section>`).join('');
```
